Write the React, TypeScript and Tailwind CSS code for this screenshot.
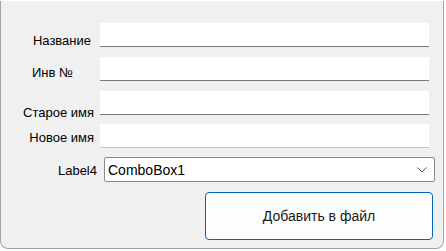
import React from 'react';

const font = { fontFamily: '"Liberation Sans", Arial, sans-serif' };

const Field = ({ line = 'border-[#7a7a7a]' }: { line?: string }) => (
    <div className={`w-[329px] h-[24px] bg-white border-b ${line}`} />
);

const App = () => {
    return (
        <div className="w-[446px] h-[251px] bg-white" style={font}>
            <div className="mt-px w-[444px] h-[248px] bg-[#f0f0f0] border-l border-r border-b border-[#a3a3a3] rounded-b-[8px] text-[13px] text-black">
                {/* Название */}
                <div className="flex pt-[22px] h-[46px]">
                    <div className="w-[99px] pr-[9px] text-right pt-[8px] leading-5">Название</div>
                    <Field />
                </div>
                {/* Инв № */}
                <div className="flex mt-[10px] h-[24px]">
                    <div className="w-[99px] pl-[31px] pt-[6px] leading-5">Инв №</div>
                    <Field />
                </div>
                {/* Старое имя */}
                <div className="flex mt-[10px] h-[24px]">
                    <div className="w-[99px] pr-[6px] text-right pt-[12px] leading-5 whitespace-nowrap">Старое имя</div>
                    <Field />
                </div>
                {/* Новое имя */}
                <div className="flex mt-[9px] h-[24px]">
                    <div className="w-[99px] pr-[6px] text-right pt-[4px] leading-5 whitespace-nowrap">Новое имя</div>
                    <Field line="border-[#c4c4c4]" />
                </div>
                {/* Label4 / ComboBox1 */}
                <div className="flex mt-[9px] h-[25px]">
                    <div className="w-[103px] pr-[7px] text-right pt-[4px] leading-5">Label4</div>
                    <div className="w-[331px] h-[25px] bg-white border border-[#8a8a8a] rounded-[2px] flex items-center justify-between pl-[3px] pr-[7px]">
                        <span className="text-[14px] leading-5">ComboBox1</span>
                        <svg width="10" height="6" viewBox="0 0 10 6" fill="none">
                            <path d="M0.5 0.5 L5 5 L9.5 0.5" stroke="#555" strokeWidth="1" />
                        </svg>
                    </div>
                </div>
                {/* Button */}
                <div className="flex mt-[10px] pl-[204px]">
                    <button className="w-[228px] h-[48px] bg-[#fdfdfd] border-[1.5px] border-[#0067c0] rounded-[4px] text-[14px] text-[#1a1a1a]">
                        Добавить в файл
                    </button>
                </div>
            </div>
        </div>
    );
};

export default App;
